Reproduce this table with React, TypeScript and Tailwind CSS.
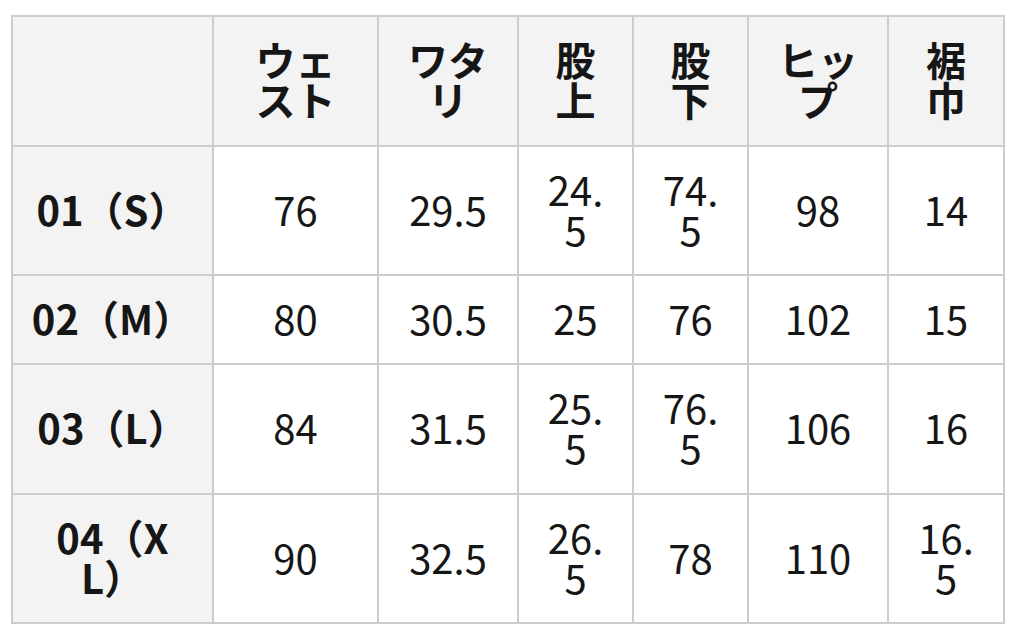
import React from "react";

const headers: string[][] = [
  ["ウェ", "スト"],
  ["ワタ", "リ"],
  ["股", "上"],
  ["股", "下"],
  ["ヒッ", "プ"],
  ["裾", "巾"],
];

type Row = { label: string[]; values: string[][] };

const rows: Row[] = [
  { label: ["01（S）"], values: [["76"], ["29.5"], ["24.", "5"], ["74.", "5"], ["98"], ["14"]] },
  { label: ["02（M）"], values: [["80"], ["30.5"], ["25"], ["76"], ["102"], ["15"]] },
  { label: ["03（L）"], values: [["84"], ["31.5"], ["25.", "5"], ["76.", "5"], ["106"], ["16"]] },
  { label: ["04（X", "L）"], values: [["90"], ["32.5"], ["26.", "5"], ["78"], ["110"], ["16.", "5"]] },
];

function Lines({ lines }: { lines: string[] }) {
  return (
    <div className="text-center">
      {lines.map((l, i) => (
        <div key={i} className="whitespace-nowrap">
          {l}
        </div>
      ))}
    </div>
  );
}

export default function App() {
  return (
    <div className="w-[1020px] h-[632px] bg-white pl-[11px] pt-[15px] font-['Noto_Sans_CJK_JP','Noto_Sans',sans-serif] text-[40px] leading-[40px] text-[#161616]">
      <div className="w-[994px] bg-[#cdcdcd] p-[2px] grid grid-cols-[199px_163px_138px_113px_113px_138px_114px] grid-rows-[128px_127px_87px_128px_127px] gap-[2px]">
        <div className="bg-[#f3f3f3]" />
        {headers.map((h, i) => (
          <div key={i} className="bg-[#f3f3f3] flex items-center justify-center pb-[4px] font-bold">
            <Lines lines={h} />
          </div>
        ))}
        {rows.map((r, ri) => (
          <React.Fragment key={ri}>
            <div className="bg-[#f3f3f3] flex items-center justify-center pb-[4px] font-bold">
              <Lines lines={r.label} />
            </div>
            {r.values.map((v, vi) => (
              <div key={vi} className="bg-white flex items-center justify-center pb-[4px]">
                <Lines lines={v} />
              </div>
            ))}
          </React.Fragment>
        ))}
      </div>
    </div>
  );
}
